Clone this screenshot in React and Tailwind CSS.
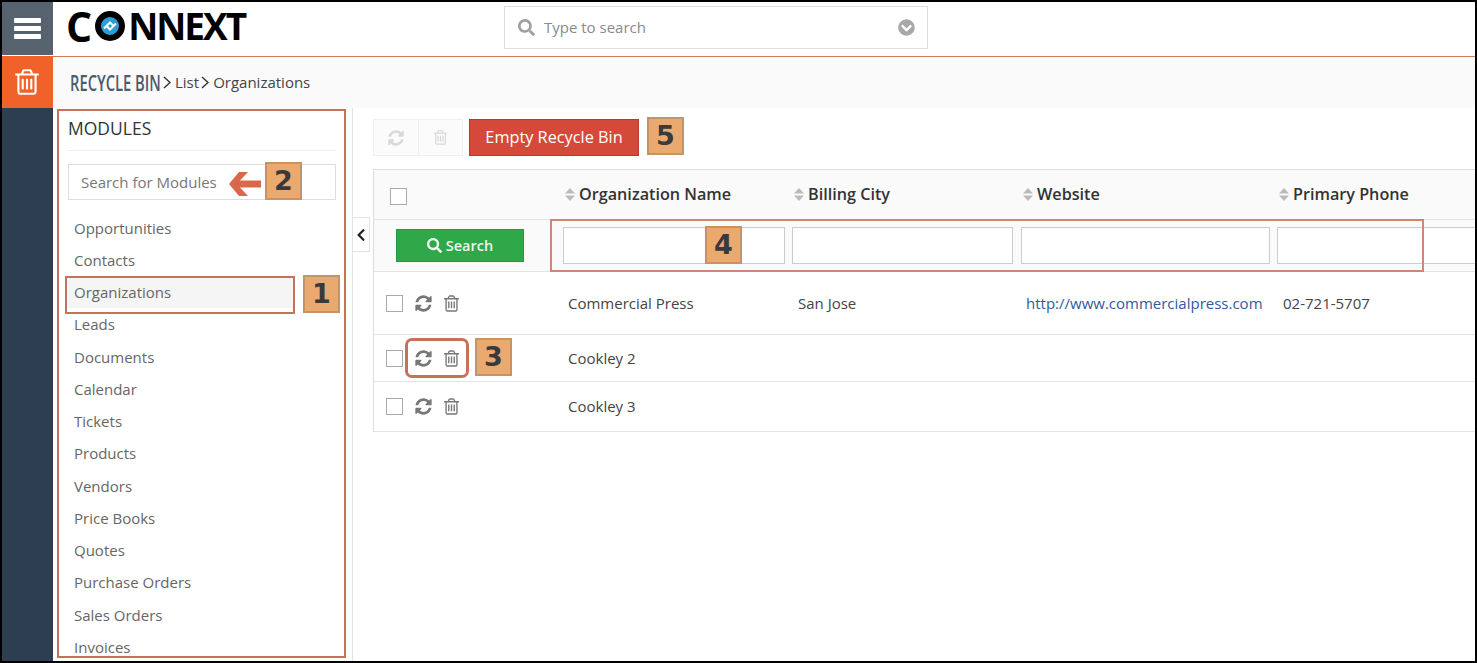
// App.jsx - Recycle bin list page with numbered callouts
import React from 'react';
import { FaSearch, FaChevronCircleDown, FaChevronLeft } from 'react-icons/fa';

const modules = [
  'Opportunities', 'Contacts', 'Organizations', 'Leads', 'Documents', 'Calendar', 'Tickets',
  'Products', 'Vendors', 'Price Books', 'Quotes', 'Purchase Orders', 'Sales Orders', 'Invoices',
];

const rows = [
  { name: 'Commercial Press', city: 'San Jose', site: 'http://www.commercialpress.com', phone: '02-721-5707', height: 'h-[63px]', pb: 'pb-[0px]' },
  { name: 'Cookley 2', city: '', site: '', phone: '', height: 'h-[47px]', pb: 'pt-[1px]' },
  { name: 'Cookley 3', city: '', site: '', phone: '', height: 'h-[50px]', pb: 'pb-[1px]' },
];

const columns = ['Organization Name', 'Billing City', 'Website', 'Primary Phone'];
const gridCols = 'grid grid-cols-[183px_229px_229px_256px_1fr]';

// old style font awesome glyphs, the newer package ones are too thin here
const RefreshIcon = ({ size, className }) => (
  <svg width={size} height={size} viewBox="0 0 1792 1792" fill="currentColor" className={className}>
    <path d="M1639 1056q0 5-1 7-64 268-268 434.5t-478 166.5q-146 0-282.5-55t-243.5-157l-129 129q-19 19-45 19t-45-19-19-45v-448q0-26 19-45t45-19h448q26 0 45 19t19 45-19 45l-137 137q71 66 161 102t187 36q134 0 250-65t186-179q11-17 53-117 8-23 30-23h192q13 0 22.5 9.5t9.5 22.5zm25-800v448q0 26-19 45t-45 19h-448q-26 0-45-19t-19-45 19-45l138-138q-148-137-349-137-134 0-250 65t-186 179q-11 17-53 117-8 23-30 23h-199q-13 0-22.5-9.5t-9.5-22.5v-7q65-268 270-434.5t480-166.5q146 0 284 55.5t245 156.5l130-129q19-19 45-19t45 19 19 45z" />
  </svg>
);

const TrashIcon = ({ size, className }) => (
  <svg width={size} height={size} viewBox="0 0 1792 1792" fill="currentColor" className={className}>
    <path d="M704 736v576q0 14-9 23t-23 9h-64q-14 0-23-9t-9-23v-576q0-14 9-23t23-9h64q14 0 23 9t9 23zm256 0v576q0 14-9 23t-23 9h-64q-14 0-23-9t-9-23v-576q0-14 9-23t23-9h64q14 0 23 9t9 23zm256 0v576q0 14-9 23t-23 9h-64q-14 0-23-9t-9-23v-576q0-14 9-23t23-9h64q14 0 23 9t9 23zm128 724v-948h-896v948q0 22 7 40.5t14.5 27 10.5 8.5h832q3 0 10.5-8.5t14.5-27 7-40.5zm-672-1076h448l-48-117q-7-9-17-11h-317q-10 2-17 11zm928 32v64q0 14-9 23t-23 9h-96v948q0 83-47 143.5t-113 60.5h-832q-66 0-113-58.5t-47-141.5v-952h-96q-14 0-23-9t-9-23v-64q0-14 9-23t23-9h309l70-167q15-37 54-63t79-26h320q40 0 79 26t54 63l70 167h309q14 0 23 9t9 23z" />
  </svg>
);

const SortIcon = () => (
  <svg width="10" height="13" viewBox="0 0 10 13" fill="#bbb" className="shrink-0 mr-[4px]">
    <path d="M5 0l5 5.500H0zM5 13L0 7.500h10z" />
  </svg>
);

const Crumb = ({ className }) => (
  <svg width="8" height="13" viewBox="0 0 8 13" fill="none" stroke="#333" strokeWidth="1.4" className={className}>
    <path d="M1 1l6 5.500-6 5.500" />
  </svg>
);

const Badge = ({ n, className }) => (
  <div className={`absolute w-[37px] h-[38px] flex items-center justify-center bg-[#eaa96f] border-2 border-[#c59466] text-[#3a3a3a] text-[27px] font-bold font-['DejaVu_Sans',sans-serif] ${className}`}>
    {n}
  </div>
);

const Logo = () => (
  <div className="flex items-center ml-[13px] mt-[-6px] text-black font-bold leading-[48px] font-['Open_Sans',sans-serif]">
    <span className="text-[41px]">C</span>
    <svg width="30" height="30" viewBox="0 0 30 30" className="ml-[3px] shrink-0">
      <circle cx="15" cy="15" r="12" fill="#2a9fd6" stroke="#000" strokeWidth="6" />
      <path d="M9 17.500l6-6 3 3M21 12.500l-6 6-3-3" fill="none" stroke="#fff" strokeWidth="2" />
    </svg>
    <span className="ml-[3px] text-[37px] tracking-[-2px]">NNEXT</span>
  </div>
);

const App = () => {
  return (
    <div className="relative h-[663px] w-[1477px] overflow-hidden border-2 border-black bg-white flex font-['Open_Sans',sans-serif]">
      {/* left rail */}
      <div className="w-[51px] shrink-0 flex flex-col bg-[#2c3e50]">
        <div className="h-[53px] bg-[#56636f] flex flex-col items-center justify-center gap-[2.500px]">
          <div className="w-[27px] h-[5.500px] bg-white rounded-[1px]" />
          <div className="w-[27px] h-[5.500px] bg-white rounded-[1px]" />
          <div className="w-[27px] h-[5.500px] bg-white rounded-[1px]" />
        </div>
        <div className="h-[1px] bg-white" />
        <div className="h-[52px] bg-[#f0622a] flex items-center justify-center text-white">
          <TrashIcon size={30} className="mr-[1px]" />
        </div>
      </div>

      <div className="flex-1 min-w-0 flex flex-col">
        {/* top bar */}
        <div className="h-[55px] shrink-0 flex items-center border-b border-[#cf7c5c]">
          <div className="w-[451px] shrink-0"><Logo /></div>
          <div className="w-[424px] h-[43px] mt-[-3px] border border-[#ddd] flex items-center pl-[13px] pr-[12px] text-[#8a8a8a] text-[15px]">
            <FaSearch className="text-[17px] text-[#a0a0a0]" />
            <span className="ml-[9px] flex-1">Type to search</span>
            <FaChevronCircleDown className="text-[#a8a8a8] text-[17px]" />
          </div>
        </div>

        {/* breadcrumb */}
        <div className="h-[51px] shrink-0 bg-[#fafafa] flex items-center pl-[17px] text-[#444] text-[15px]">
          <span className="inline-block w-[91px] text-[#4c5b6b] text-[22px] font-semibold whitespace-nowrap origin-left scale-x-[0.67]">RECYCLE BIN</span>
          <Crumb className="ml-[2px] mr-[4px]" />
          <span>List</span>
          <Crumb className="ml-[2px] mr-[4px]" />
          <span>Organizations</span>
        </div>

        <div className="flex-1 min-h-0 flex">
          {/* modules sidebar */}
          <div className="w-[300px] shrink-0 border-r border-[#e3e3e3] pl-[15px] pr-[16px] overflow-hidden">
            <div className="h-[43px] pt-[8px] border-b border-[#eee] text-[17.500px] leading-[24px] text-[#333]">MODULES</div>
            <div className="mt-[13px] h-[36px] border border-[#ddd] pl-[12px] flex items-center text-[15px] text-[#777]">Search for Modules</div>
            <div className="mt-[11.700px] ml-[-2px] w-[228px]">
              {modules.map((m) => (
                <div
                  key={m}
                  className={`h-[32.250px] pl-[8px] flex items-center text-[15px] text-[#666] ${m === 'Organizations' ? 'bg-[#f5f5f5]' : ''}`}
                >
                  {m}
                </div>
              ))}
            </div>
          </div>

          {/* main */}
          <div className="relative flex-1 min-w-0 pl-[20px] pt-[11px]">
            <div className="absolute left-0 top-[109px] w-[17px] h-[35px] bg-white border border-l-0 border-[#e3e3e3] flex items-center justify-center text-[#222] text-[14px]">
              <FaChevronLeft />
            </div>

            <div className="flex h-[37px] gap-[6px]">
              <div className="w-[90px] flex border border-[#f0f0f0] bg-[#fbfbfb] text-[#d8d8d8]">
                <div className="w-[45px] flex items-center justify-center border-r border-[#f0f0f0]"><RefreshIcon size={18} /></div>
                <div className="flex-1 flex items-center justify-center"><TrashIcon size={17} /></div>
              </div>
              <div className="w-[170px] pb-[1px] flex items-center justify-center bg-[#d5493a] border border-[#b93a2d] text-white text-[16.300px]">
                Empty Recycle Bin
              </div>
            </div>

            <div className="mt-[13px] border-l border-t border-[#ddd]">
              <div className={`${gridCols} h-[50px] bg-[#fafafa] border-b border-[#e3e3e3] items-center`}>
                <div className="pl-[16px] pt-[4px]">
                  <div className="w-[17px] h-[17px] bg-white border border-[#aaa]" />
                </div>
                {columns.map((c) => (
                  <div key={c} className="pl-[8px] flex items-center text-[16.200px] font-semibold text-[#333] whitespace-nowrap">
                    <SortIcon />
                    {c}
                  </div>
                ))}
              </div>

              <div className={`${gridCols} h-[52px] bg-[#fafafa] border-b border-[#e3e3e3] items-center`}>
                <div className="pl-[22px]">
                  <div className="w-[128px] h-[33px] bg-[#2fa84a] border border-[#28953f] flex items-center justify-center text-[#eef8ee] text-[14.500px] font-semibold">
                    <FaSearch className="text-[15px] mr-[4px]" />
                    Search
                  </div>
                </div>
                <div className="pl-[6px]"><div className="w-[222px] h-[37px] bg-white border border-[#ccc]" /></div>
                <div className="pl-[6px]"><div className="w-[221px] h-[37px] bg-white border border-[#ccc]" /></div>
                <div className="pl-[6px]"><div className="w-[249px] h-[37px] bg-white border border-[#ccc]" /></div>
                <div className="pl-[6px]"><div className="w-[300px] h-[37px] bg-white border border-[#ccc]" /></div>
              </div>

              {rows.map((r) => (
                <div key={r.name} className={`${gridCols} ${r.height} ${r.pb} border-b border-[#e3e3e3] items-center text-[15px] text-[#444]`}>
                  <div className="pl-[12px] flex items-center text-[#777]">
                    <div className="w-[17px] h-[17px] bg-white border border-[#aaa]" />
                    <RefreshIcon size={19} className="ml-[11px]" />
                    <TrashIcon size={19} className="ml-[9px]" />
                  </div>
                  <div className="pl-[11px] whitespace-nowrap">{r.name}</div>
                  <div className="pl-[12px] whitespace-nowrap">{r.city}</div>
                  <div className="pl-[11px] whitespace-nowrap text-[#2f5a9e]">{r.site}</div>
                  <div className="pl-[12px] whitespace-nowrap">{r.phone}</div>
                </div>
              ))}
            </div>
          </div>
        </div>
      </div>

      {/* numbered callouts over the page */}
      <div className="absolute left-[55px] top-[107px] w-[289px] h-[549px] border-2 border-[#c8705a]" />
      <div className="absolute left-[63px] top-[274px] w-[230px] h-[38px] border-2 border-[#c8705a]" />
      <div className="absolute left-[403px] top-[336px] w-[64px] h-[40px] rounded-[7px] border-[3px] border-[#c8705a]" />
      <div className="absolute left-[548px] top-[217px] w-[874px] h-[53px] border-2 border-[#d08672]" />
      <svg width="32" height="24" viewBox="0 0 32 24" fill="#d9684a" className="absolute left-[227px] top-[170px]">
        <path d="M0 12L10 0h9l-8 8.500h21v7H11l8 8.500h-9z" />
      </svg>
      <Badge n="1" className="left-[301px] top-[273px]" />
      <Badge n="2" className="left-[263px] top-[160px]" />
      <Badge n="3" className="left-[473px] top-[336px]" />
      <Badge n="4" className="left-[703px] top-[224px]" />
      <Badge n="5" className="left-[645px] top-[115px]" />
    </div>
  );
};

export default App;
